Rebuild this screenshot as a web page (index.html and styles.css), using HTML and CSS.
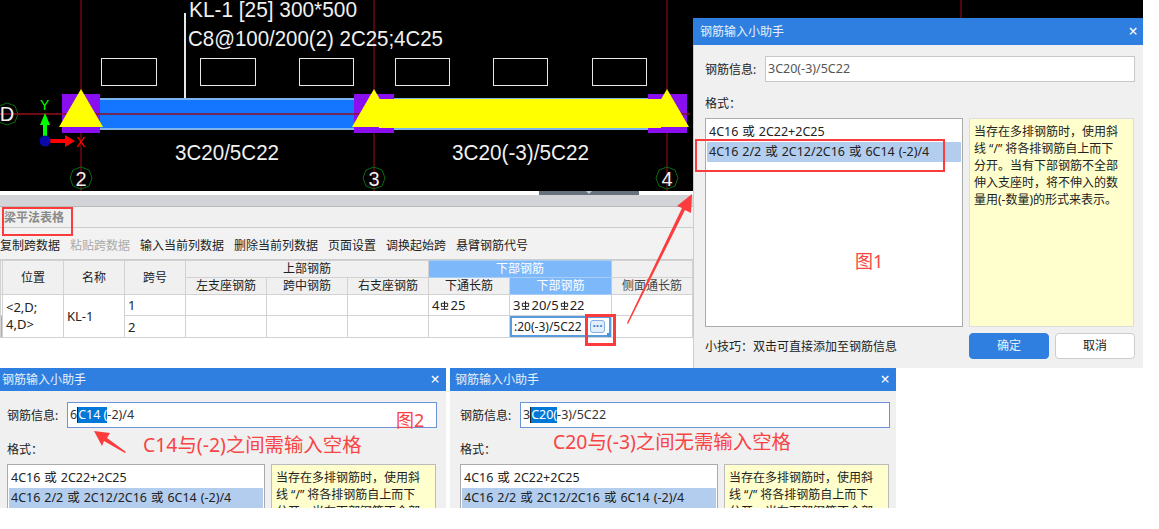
FILE: index.html
```html
<!DOCTYPE html>
<html>
<head>
    <meta charset="UTF-8">
    <title>钢筋输入小助手</title>
    <link rel="stylesheet" href="styles.css">
</head>
<body>
    <div class="page">
        <!-- CAD view -->
        <svg class="cad" width="1143" height="191" viewBox="0 0 1143 191">
            <g class="axis-line">
                <line x1="81" y1="0" x2="81" y2="191"/>
                <line x1="374" y1="0" x2="374" y2="191"/>
                <line x1="667" y1="0" x2="667" y2="191"/>
                <line x1="961" y1="0" x2="961" y2="18"/>
            </g>
            <g class="bubble">
                <polygon points="7,103 15,106 18,114 15,122 7,125 -1,122 -4,114 -1,106"/>
                <polygon points="81,167 89,170 92,178 89,186 81,189 73,186 70,178 73,170"/>
                <polygon points="374,167 382,170 385,178 382,186 374,189 366,186 363,178 366,170"/>
                <polygon points="667,167 675,170 678,178 675,186 667,189 659,186 656,178 659,170"/>
            </g>
            <g class="opening">
                <rect x="101.5" y="58.5" width="55" height="27"/>
                <rect x="200.5" y="58.5" width="55" height="27"/>
                <rect x="299.5" y="58.5" width="54" height="27"/>
                <rect x="395.5" y="58.5" width="54" height="27"/>
                <rect x="493.5" y="58.5" width="54" height="27"/>
                <rect x="592.5" y="58.5" width="54" height="27"/>
            </g>
            <line class="leader" x1="185" y1="13" x2="185" y2="98"/>
            <rect class="beam-edge" x="100" y="98" width="587" height="32"/>
            <rect class="beam-blue" x="100" y="100" width="255" height="28"/>
            <rect class="pier" x="62" y="94" width="38" height="39"/>
            <rect class="pier" x="354" y="94" width="40" height="39"/>
            <rect class="pier" x="648" y="94" width="39" height="39"/>
            <line class="axis-h" x1="0" y1="114" x2="690" y2="114"/>
            <rect class="beam-yellow" x="379" y="99" width="282" height="29"/>
            <polygon class="tri" points="81,89 59,127 103,127"/>
            <polygon class="tri" points="374,89 352,127 396,127"/>
            <polygon class="tri" points="667,89 645,127 689,127"/>
            <g class="ucs">
                <polygon class="ucs-y" points="43,136 43,125 40,125 45,113 50,125 47,125 47,136"/>
                <polygon class="ucs-x" points="48,139 65,139 65,135 75,141 65,147 65,143 48,143"/>
                <circle class="ucs-o" cx="45" cy="141" r="5.5"/>
                <text class="ucs-y" x="40" y="110">Y</text>
                <text class="ucs-x" x="76" y="147">X</text>
            </g>
            <text class="cad-text big" x="189" y="17" textLength="168" lengthAdjust="spacingAndGlyphs">KL-1 [25] 300*500</text>
            <text class="cad-text big" x="188" y="46" textLength="255" lengthAdjust="spacingAndGlyphs">C8@100/200(2) 2C25;4C25</text>
            <text class="cad-text big" x="175" y="160" textLength="104" lengthAdjust="spacingAndGlyphs">3C20/5C22</text>
            <text class="cad-text big" x="452" y="160" textLength="137" lengthAdjust="spacingAndGlyphs">3C20(-3)/5C22</text>
            <text class="cad-text" x="7" y="121" text-anchor="middle">D</text>
            <text class="cad-text" x="81" y="186" text-anchor="middle">2</text>
            <text class="cad-text" x="374" y="186" text-anchor="middle">3</text>
            <text class="cad-text" x="667" y="186" text-anchor="middle">4</text>
        </svg>

        <!-- beam table panel -->
        <div class="panel">
            <div class="scroll-strip"><div class="scroll-thumb"><span class="scroll-caret"></span></div></div>
            <div class="splitter"></div>
            <div class="panel-title">梁平法表格</div>
            <div class="toolbar">
                <span>复制跨数据</span>
                <span class="off">粘贴跨数据</span>
                <span>输入当前列数据</span>
                <span>删除当前列数据</span>
                <span>页面设置</span>
                <span>调换起始跨</span>
                <span>悬臂钢筋代号</span>
            </div>
            <table class="grid">
                <colgroup>
                    <col class="c-idx"><col class="c-pos"><col class="c-name"><col class="c-span">
                    <col class="c-a"><col class="c-a"><col class="c-a">
                    <col class="c-b"><col class="c-c"><col class="c-d">
                </colgroup>
                <tr class="head-1">
                    <th rowspan="2"></th>
                    <th rowspan="2">位置</th>
                    <th rowspan="2">名称</th>
                    <th rowspan="2">跨号</th>
                    <th colspan="3">上部钢筋</th>
                    <th colspan="2" class="on">下部钢筋</th>
                    <th></th>
                </tr>
                <tr class="head-2">
                    <th>左支座钢筋</th>
                    <th>跨中钢筋</th>
                    <th>右支座钢筋</th>
                    <th>下通长筋</th>
                    <th class="on">下部钢筋</th>
                    <th class="dim">侧面通长筋</th>
                </tr>
                <tr class="data">
                    <td></td>
                    <td rowspan="2" class="pos">&lt;2,D;<br>4,D&gt;</td>
                    <td rowspan="2">KL-1</td>
                    <td>1</td>
                    <td></td><td></td><td></td>
                    <td>4<svg class="bar" width="9" height="9" viewBox="0 0 10 10"><use href="#hrb"/></svg>25</td>
                    <td>3<svg class="bar" width="9" height="9" viewBox="0 0 10 10"><use href="#hrb"/></svg>20/5<svg class="bar" width="9" height="9" viewBox="0 0 10 10"><use href="#hrb"/></svg>22</td>
                    <td></td>
                </tr>
                <tr class="data">
                    <td class="idx-on"></td>
                    <td>2</td>
                    <td></td><td></td><td></td><td></td>
                    <td class="edit">
                        <div class="edit-box">
                            <span class="edit-text">:20(-3)/5C22</span>
                            <span class="more">···</span>
                        </div>
                        <span class="handle"></span>
                    </td>
                    <td></td>
                </tr>
            </table>
        </div>

        <svg class="defs" width="0" height="0">
            <symbol id="hrb" viewBox="0 0 10 10">
                <path d="M5 0V9M1.5 2.5H8.5V6H1.5ZM1 9.2H9" fill="none" stroke="#222" stroke-width="1.1"/>
            </symbol>
        </svg>

        <!-- dialog 1 -->
        <div class="dialog d-main">
            <div class="d-title">钢筋输入小助手<span class="d-close">×</span></div>
            <div class="d-body">
                <div class="d-info">
                    <label>钢筋信息:</label>
                    <div class="d-input plain">3C20(-3)/5C22</div>
                </div>
                <div class="d-format">格式：</div>
                <div class="d-cols">
                    <div class="d-list">
                        <div class="d-row">4C16 或 2C22+2C25</div>
                        <div class="d-row sel">4C16 2/2 或 2C12/2C16 或 6C14 (-2)/4</div>
                    </div>
                    <div class="d-note">当存在多排钢筋时，使用斜<br>线 “/” 将各排钢筋自上而下<br>分开。当有下部钢筋不全部<br>伸入支座时，将不伸入的数<br>量用(-数量)的形式来表示。</div>
                </div>
                <div class="d-foot">
                    <span class="d-tip">小技巧：双击可直接添加至钢筋信息</span>
                    <div class="d-btns">
                        <span class="btn primary">确定</span>
                        <span class="btn">取消</span>
                    </div>
                </div>
            </div>
        </div>

        <!-- dialog 2 -->
        <div class="dialog d-small d-left">
            <div class="d-title">钢筋输入小助手<span class="d-close">×</span></div>
            <div class="d-body">
                <div class="d-info">
                    <label>钢筋信息:</label>
                    <div class="d-input">6<span class="caret">C14 (</span>-2)/4</div>
                </div>
                <div class="d-format">格式：</div>
                <div class="d-cols">
                    <div class="d-list">
                        <div class="d-row">4C16 或 2C22+2C25</div>
                        <div class="d-row sel">4C16 2/2 或 2C12/2C16 或 6C14 (-2)/4</div>
                    </div>
                    <div class="d-note">当存在多排钢筋时，使用斜<br>线 “/” 将各排钢筋自上而下<br>分开。当有下部钢筋不全部</div>
                </div>
            </div>
        </div>

        <!-- dialog 3 -->
        <div class="dialog d-small d-right">
            <div class="d-title">钢筋输入小助手<span class="d-close">×</span></div>
            <div class="d-body">
                <div class="d-info">
                    <label>钢筋信息:</label>
                    <div class="d-input">3<span class="caret">C20(</span>-3)/5C22</div>
                </div>
                <div class="d-format">格式：</div>
                <div class="d-cols">
                    <div class="d-list">
                        <div class="d-row">4C16 或 2C22+2C25</div>
                        <div class="d-row sel">4C16 2/2 或 2C12/2C16 或 6C14 (-2)/4</div>
                    </div>
                    <div class="d-note">当存在多排钢筋时，使用斜<br>线 “/” 将各排钢筋自上而下<br>分开。当有下部钢筋不全部</div>
                </div>
            </div>
        </div>

        <!-- annotations drawn over the screenshots -->
        <div class="mark mark-title"></div>
        <div class="mark mark-more"></div>
        <div class="mark mark-row"></div>
        <div class="note-text fig1">图1</div>
        <div class="note-text fig2">图2</div>
        <div class="note-text note-a">C14与(-2)之间需输入空格</div>
        <div class="note-text note-b">C20与(-3)之间无需输入空格</div>
        <svg class="arrows" width="1159" height="529" viewBox="0 0 1159 529">
            <polygon points="627,323 682,208 677,206 692,194 691,213 685,210 628,324"/>
            <polygon points="94,431 110,433 107,438 126,452 125,453 104,441 102,446"/>
        </svg>
    </div>
</body>
</html>
```

FILE: styles.css
```css
html, body {
    margin: 0;
    padding: 0;
    background: #fff;
}
.page {
    position: relative;
    width: 1159px;
    height: 529px;
    overflow: hidden;
    font-family: "Noto Sans", "Noto Sans CJK SC", sans-serif;
    font-size: 12px;
    color: #222;
}

/* CAD view */
.cad {
    display: block;
    background: #000;
}
.axis-line line { stroke: #a0101c; stroke-width: 1; }
.axis-h { stroke: #92101f; stroke-width: 1.4; }
.bubble polygon { fill: none; stroke: #0c6a12; stroke-width: 1; }
.opening rect { fill: none; stroke: #e8e8e8; stroke-width: 1; }
.leader { stroke: #e8e8e8; stroke-width: 2; }
.beam-edge { fill: #7fb4ea; }
.beam-blue { fill: #1476ff; }
.beam-yellow { fill: #ffff00; }
.pier { fill: #8a0ff0; }
.tri { fill: #ffff00; }
.ucs-y { fill: #00ff00; font: 14px "Liberation Sans", sans-serif; }
.ucs-x { fill: #ff0000; font: 14px "Liberation Sans", sans-serif; }
.ucs-o { fill: #0a0aa8; }
.cad-text {
    fill: #f0f0f0;
    font: 20px "Liberation Sans", sans-serif;
}
.cad-text.big { font-size: 22px; }

/* table panel */
.panel {
    width: 693px;
}
.scroll-strip {
    height: 4px;
    padding-left: 539px;
}
.scroll-thumb {
    display: flex;
    justify-content: center;
    width: 100px;
    height: 4px;
    background: #66737d;
}
.scroll-caret {
    width: 0;
    height: 0;
    border-left: 3px solid transparent;
    border-right: 3px solid transparent;
    border-top: 3px solid #c8ccd0;
}
.splitter {
    height: 12px;
    background: #d3d4d8;
    border-bottom: 1px solid #bbb;
    box-sizing: border-box;
}
.panel-title {
    height: 21px;
    line-height: 21px;
    padding-left: 4px;
    font-weight: bold;
    color: #8a8a8a;
    background: #f0f0f0;
    border-bottom: 1px solid #ccc;
    box-sizing: border-box;
}
.toolbar {
    display: flex;
    gap: 10px;
    height: 32px;
    line-height: 35px;
    background: #f2f2f2;
    border-bottom: 1px solid #ccc;
    box-sizing: border-box;
    white-space: nowrap;
}
.toolbar .off { color: #aaa; }

.grid {
    border-collapse: collapse;
    table-layout: fixed;
    width: 692px;
}
.c-idx { width: 2px; }
.c-pos { width: 61px; }
.c-name { width: 61px; }
.c-span { width: 61px; }
.c-a { width: 81px; }
.c-b { width: 81px; }
.c-c { width: 102px; }
.c-d { width: 81px; }
.grid th, .grid td {
    border: 1px solid #d2d2d2;
    padding: 0;
    overflow: hidden;
    white-space: nowrap;
}
.grid th {
    height: 16px;
    background: #f0f0f0;
    font-weight: normal;
    line-height: 16px;
}
.grid th.on {
    background: #7db8fa;
    color: #fff;
    border-color: #a8cdf5;
}
.grid th.dim { color: #444; }
.grid td {
    height: 20px;
    padding-left: 3px;
    line-height: 20px;
    font-size: 13px;
}
.grid td:first-child { padding: 0; }
.grid .pos { line-height: 17px; padding-left: 3px; }
.grid .idx-on { background: #7db8fa; }
.bar { vertical-align: 0; margin: 0 1px; }

.grid .edit {
    position: relative;
    padding: 0;
}
.edit-box {
    display: flex;
    align-items: center;
    justify-content: space-between;
    height: 21px;
    padding-right: 4px;
    border: 2px solid #5a9be0;
    box-sizing: border-box;
    overflow: hidden;
}
.edit-text { padding-left: 2px; font-size: 12px; }
.more {
    width: 15px;
    height: 13px;
    line-height: 10px;
    text-align: center;
    font-size: 12px;
    font-weight: bold;
    color: #3d7fc8;
    background: #e4effa;
    border: 1px solid #7db0e6;
    border-radius: 3px;
    box-sizing: border-box;
}
.handle {
    position: absolute;
    right: 0;
    bottom: 0;
    width: 4px;
    height: 4px;
    background: #4a90e0;
}

/* dialogs */
.dialog {
    position: absolute;
    background: #f0f0f0;
    overflow: hidden;
}
.d-main { left: 693px; top: 18px; width: 450px; height: 350px; }
.d-small { top: 368px; width: 446px; height: 140px; }
.d-left { left: 0; }
.d-right { left: 450px; }
.d-title {
    position: relative;
    height: 27px;
    line-height: 27px;
    padding-left: 7px;
    background: #2e7fe0;
    color: #e8f0fa;
}
.d-close {
    position: absolute;
    right: 4px;
    top: 0;
    width: 12px;
    text-align: center;
    font-size: 16px;
    color: #fff;
}
.d-small .d-title { height: 23px; line-height: 23px; padding-left: 2px; }
.d-small .d-close { right: 5px; }
.d-right .d-title { padding-left: 5px; }

.d-body { padding: 11px 8px 0 12px; }
.d-main .d-body { height: 323px; padding-left: 11px; border-left: 1px solid #ccc; }
.d-small .d-body { padding: 11px 9px 0 7px; }
.d-right .d-body { padding-left: 10px; padding-right: 6px; }

.d-info {
    display: flex;
    align-items: center;
    gap: 5px;
    height: 26px;
}
.d-info label { width: 55px; white-space: nowrap; }
.d-input {
    flex: 1;
    height: 26px;
    line-height: 24px;
    padding-left: 2px;
    background: #fff;
    border: 1px solid #6c93d8;
    box-sizing: border-box;
    font-size: 12.5px;
    color: #333;
}
.d-input.plain { border-color: #c8c8c8; color: #555; }
.caret {
    display: inline-block;
    height: 16px;
    line-height: 16px;
    background: #0078d7;
    color: #fff;
    border-left: 1px solid #222;
}
.d-format {
    height: 36px;
    line-height: 44px;
}
.d-cols {
    display: flex;
    gap: 6px;
}
.d-main .d-cols { height: 209px; }
.d-list {
    width: 258px;
    height: 209px;
    padding: 3px 1px;
    background: #fff;
    border: 1px solid #aaa;
    box-sizing: border-box;
    font-size: 12.5px;
    word-spacing: 0.7px;
    flex: none;
}
.d-row {
    height: 20px;
    line-height: 20px;
    padding-left: 2px;
    white-space: nowrap;
}
.d-row.sel { background: #b3cdee; }
.d-note {
    width: 165px;
    height: 209px;
    padding: 4px 0 0 4px;
    background: #ffffcd;
    border: 1px solid #ddd;
    box-sizing: border-box;
    line-height: 17px;
    white-space: nowrap;
    flex: none;
}
.d-small .d-note { border-color: #bbb; }
.d-foot {
    display: flex;
    align-items: center;
    justify-content: space-between;
    height: 26px;
    margin-top: 6px;
}
.d-btns {
    display: flex;
    gap: 6px;
}
.btn {
    width: 80px;
    height: 26px;
    line-height: 24px;
    text-align: center;
    background: #fff;
    border: 1px solid #ccc;
    border-radius: 4px;
    box-sizing: border-box;
}
.btn.primary {
    background: #2e7fe0;
    border-color: #2e7fe0;
    color: #e8f0fa;
}

/* annotations */
.mark {
    position: absolute;
    border: 2px solid #fc3c3c;
    box-sizing: border-box;
}
.mark-title { left: 2px; top: 207px; width: 71px; height: 29px; }
.mark-more { left: 585px; top: 314px; width: 31px; height: 32px; border-width: 3px; }
.mark-row { left: 695px; top: 139px; width: 250px; height: 33px; }
.note-text {
    position: absolute;
    color: #f84444;
    font-size: 19.4px;
    line-height: 24px;
    white-space: nowrap;
}
.fig1 { left: 855px; top: 249px; font-size: 18px; }
.fig2 { left: 396px; top: 408px; font-size: 18px; }
.note-a { left: 143px; top: 433px; }
.note-b { left: 553px; top: 430px; }
.arrows {
    position: absolute;
    left: 0;
    top: 0;
    pointer-events: none;
}
.arrows polygon { fill: #fc3c3c; }
.defs { position: absolute; }
```
